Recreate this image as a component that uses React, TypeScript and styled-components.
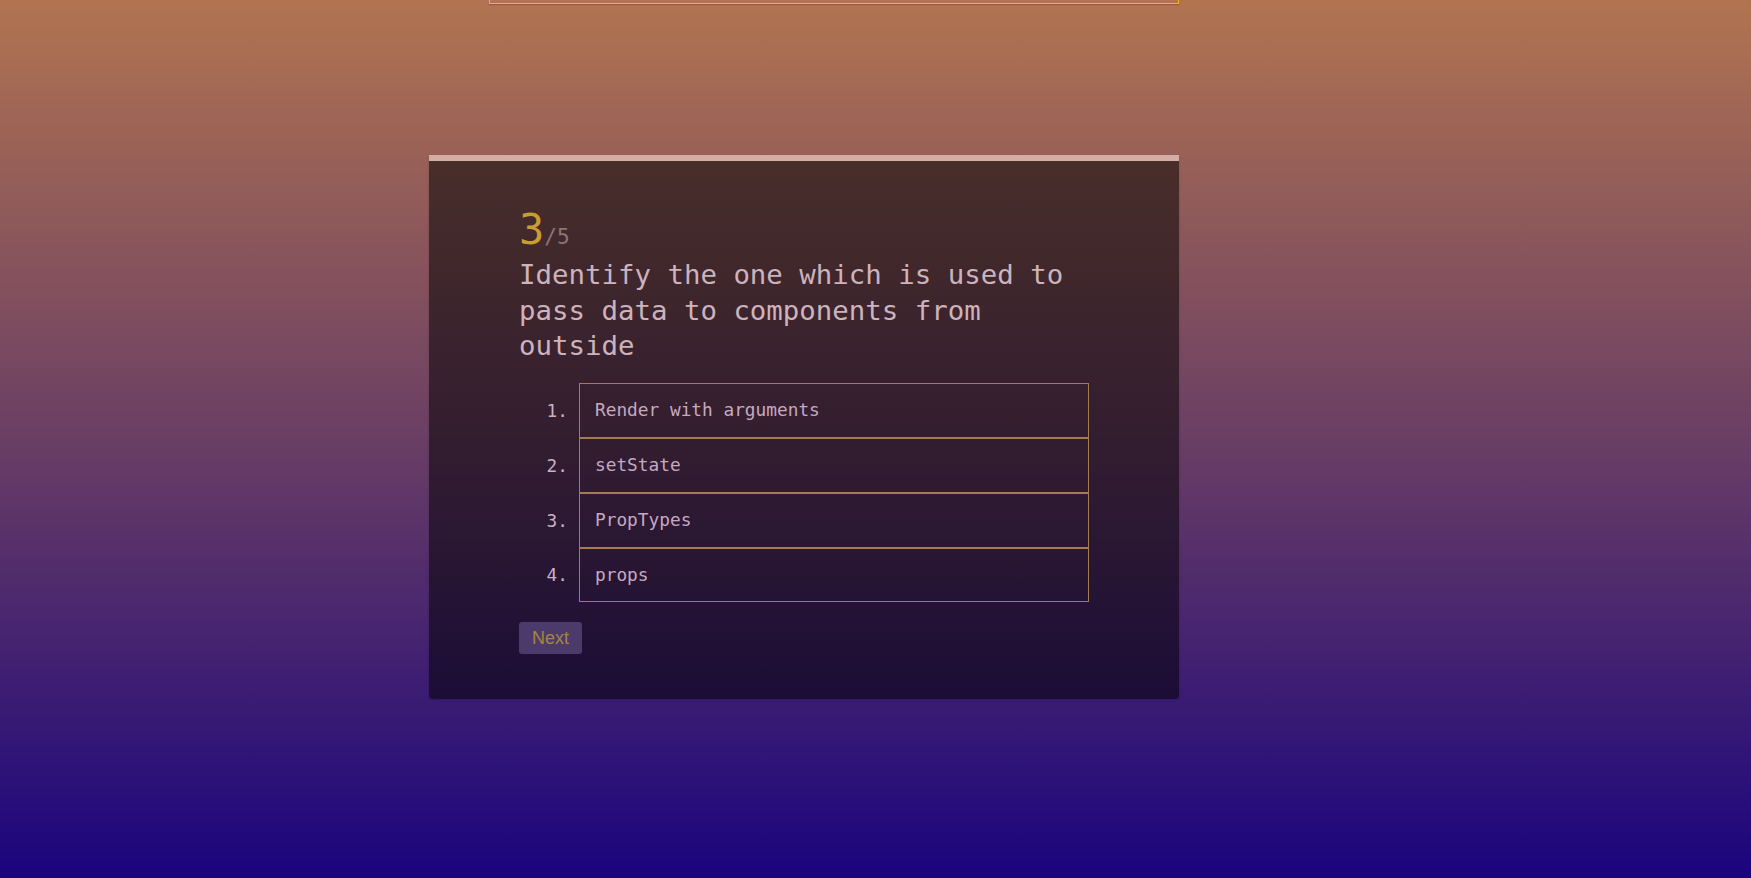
import React from "react";
import styled, { createGlobalStyle } from "styled-components";

const GlobalStyle = createGlobalStyle`
  html, body {
    margin: 0;
    padding: 0;
  }
  body {
    min-height: 100vh;
    background: linear-gradient(180deg, #b27450 0%, #6a3e64 50%, #1a047e 100%);
    background-attachment: fixed;
    font-family: "DejaVu Sans Mono", "Liberation Mono", monospace;
  }
`;

const Page = styled.div`
  min-height: 878px;
  box-sizing: border-box;
  display: flex;
  flex-direction: column;
  align-items: flex-start;
  padding-left: 429px;
`;

const Column = styled.div`
  width: 750px;
  display: flex;
  flex-direction: column;
`;

const TopFrame = styled.div`
  align-self: flex-end;
  width: 690px;
  height: 4px;
  box-sizing: border-box;
  border: 1.5px solid #f2b52e;
  border-top: none;
  box-shadow: 0 1px 1px rgba(120, 60, 10, 0.5);
`;

const Card = styled.section`
  margin-top: 151px;
  background: rgba(0, 0, 0, 0.52);
  border-radius: 0 0 4px 4px;
  box-shadow: 0 1px 3px rgba(0, 0, 0, 0.15);
  display: flex;
  flex-direction: column;
`;

const Progress = styled.div`
  height: 6px;
  background: #d4aea5;
`;

const Body = styled.div`
  padding: 48px 90px 45px 90px;
  display: flex;
  flex-direction: column;
  align-items: flex-start;
`;

const Counter = styled.div`
  display: flex;
  align-items: baseline;
  line-height: 1;
`;

const Current = styled.span`
  font-size: 42px;
  color: #c99d30;
`;

const Total = styled.span`
  font-size: 21px;
  color: #8f7474;
`;

const Question = styled.h2`
  margin: 6px 0 0 0;
  font-weight: normal;
  font-size: 27.4px;
  line-height: 35.7px;
  color: #cdb3bd;
  width: 100%;
`;

const Options = styled.ol`
  list-style: none;
  margin: 19px 0 0 0;
  padding: 0;
  width: 100%;
  display: flex;
  flex-direction: column;
`;

const Option = styled.li`
  display: flex;
  align-items: center;
`;

const Num = styled.span`
  width: 49px;
  flex: none;
  text-align: right;
  padding-right: 11px;
  font-size: 17.8px;
  color: #c6b2c8;
`;

const Choice = styled.div`
  flex: 1;
  border: 1px solid #a47c52;
  padding: 15px 15px;
  font-size: 17.8px;
  line-height: 22.8px;
  color: #c6a8c1;
`;

const NextButton = styled.button`
  margin-top: 20px;
  font-family: "Liberation Sans", Arial, sans-serif;
  font-size: 18px;
  line-height: 20px;
  padding: 6px 13px;
  border: none;
  border-radius: 3px;
  background: #4c3a6a;
  color: #a28545;
  cursor: pointer;
`;

const options = ["Render with arguments", "setState", "PropTypes", "props"];

export default function App() {
  return (
    <>
      <GlobalStyle />
      <Page>
        <Column>
          <TopFrame />
          <Card>
            <Progress />
            <Body>
              <Counter>
                <Current>3</Current>
                <Total>/5</Total>
              </Counter>
              <Question>
                Identify the one which is used to pass data to components from outside
              </Question>
              <Options>
                {options.map((o, i) => (
                  <Option key={o}>
                    <Num>{i + 1}.</Num>
                    <Choice>{o}</Choice>
                  </Option>
                ))}
              </Options>
              <NextButton>Next</NextButton>
            </Body>
          </Card>
        </Column>
      </Page>
    </>
  );
}
